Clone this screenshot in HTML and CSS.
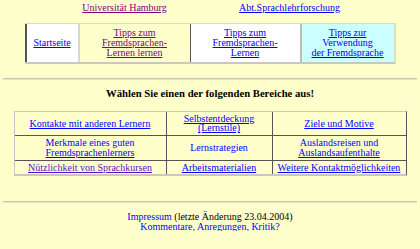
FILE: index.html
```html
<!DOCTYPE html>
<html lang="de">
<head>
<meta charset="utf-8">
<title>Tipps zur Verwendung der Fremdsprache</title>
<link rel="stylesheet" href="styles.css">
</head>
<body>
<div class="page">
  <table class="toplinks">
    <tr>
      <td><a class="visited" href="#">Universität Hamburg</a></td>
      <td><a href="#">Abt.Sprachlehrforschung</a></td>
    </tr>
  </table>

  <table class="nav">
    <tr>
      <td class="n1 white"><a href="#">Startseite</a></td>
      <td class="n2"><a class="visited" href="#">Tipps zum<br>Fremdsprachen-<br>Lernen lernen</a></td>
      <td class="n3 white"><a href="#">Tipps zum<br>Fremdsprachen-<br>Lernen</a></td>
      <td class="n4 cyan"><a href="#">Tipps zur</a><br><span class="plain">Verwendung</span><br><a href="#">der Fremdsprache</a></td>
    </tr>
  </table>

  <hr class="rule rule-top">

  <h1 class="heading">Wählen Sie einen der folgenden Bereiche aus!</h1>

  <table class="areas">
    <tr class="r1">
      <td class="c1"><a href="#">Kontakte mit anderen Lernern</a></td>
      <td class="c2"><a href="#">Selbstentdeckung<br>(Lernstile)</a></td>
      <td class="c3"><a href="#">Ziele und Motive</a></td>
    </tr>
    <tr class="r2">
      <td class="c1"><span class="plain">Merkmale eines guten</span><br><a href="#">Fremdsprachenlerners</a></td>
      <td class="c2"><span class="plain">Lernstrategien</span></td>
      <td class="c3"><span class="plain">Auslandsreisen und</span><br><a href="#">Auslandsaufenthalte</a></td>
    </tr>
    <tr class="r3">
      <td class="c1"><a class="visited2" href="#">Nützlichkeit von Sprachkursen</a></td>
      <td class="c2"><a href="#">Arbeitsmaterialien</a></td>
      <td class="c3"><a href="#">Weitere Kontaktmöglichkeiten</a></td>
    </tr>
  </table>

  <hr class="rule rule-bottom">

  <div class="footer">
    <div><span class="plain">Impressum</span> (letzte Änderung 23.04.2004)</div>
    <div><a href="#">Kommentare, Anregungen, Kritik?</a></div>
  </div>
</div>
</body>
</html>
```

FILE: styles.css
```css
html, body {
  margin: 0;
  padding: 0;
  background: #ffffcc;
}

body {
  font-family: "Liberation Serif", "Times New Roman", serif;
  font-size: 10px;
  line-height: 9.7px;
  color: #000;
}

.page {
  padding: 3px 3px 0 3px;
}

a {
  color: #0000ff;
  text-decoration: underline;
}

a.visited {
  color: #800080;
}

a.visited2 {
  color: #5a10c8;
}

.plain {
  color: #0000ff;
}

table {
  border-collapse: separate;
  border-spacing: 0;
  font-size: 10px;
  line-height: 9.7px;
}

td {
  text-align: center;
  vertical-align: middle;
}

.toplinks {
  width: 330px;
  margin: 0 0 0 39px;
}

.toplinks td {
  width: 50%;
  padding: 0;
}

.nav {
  width: 371px;
  margin: 10px auto 0 auto;
  border-top: 1px solid #d8d8d0;
  border-bottom: 2px solid #c8c8c0;
  border-right: 2px solid #dcdcd4;
}

.nav td {
  padding: 4px 1px;
  height: 30px;
}

.nav .n1 {
  width: 49px;
  border-left: 2px solid #555;
}

.nav .n2 {
  width: 108px;
  border-left: 2px solid #d8d8d0;
}

.nav .n3 {
  width: 107px;
  border-left: 1px solid #555;
}

.nav .n4 {
  border-left: 2px solid #bcbcb4;
}

.white {
  background: #ffffff;
}

.cyan {
  background: #ccffff;
}

.rule {
  height: 0;
  margin: 0;
  border: 0;
  border-top: 1px solid #c8c8b0;
  border-bottom: 1px solid #e4e4cc;
}

.rule-top {
  margin-top: 14px;
}

.heading {
  margin: 8px 0 0 0;
  font-size: 10.7px;
  font-weight: bold;
  text-align: center;
  line-height: 11px;
}

.areas {
  width: 393px;
  margin: 12px auto 0 auto;
  border-top: 1px solid #c8c8c0;
  border-left: 1px solid #c8c8c0;
  border-bottom: 2px solid #c8c8c0;
  border-right: 1px solid #555;
}

.areas td {
  padding: 2px 1px;
}

.areas .c1 {
  width: 149px;
}

.areas .c2 {
  width: 103px;
  border-left: 1px solid #555;
}

.areas .c3 {
  border-left: 1px solid #555;
}

.areas .r2 td,
.areas .r3 td {
  border-top: 1px solid #555;
}

.rule-bottom {
  margin-top: 25px;
}

.footer {
  margin-top: 9px;
  text-align: center;
  line-height: 9.5px;
}
```
